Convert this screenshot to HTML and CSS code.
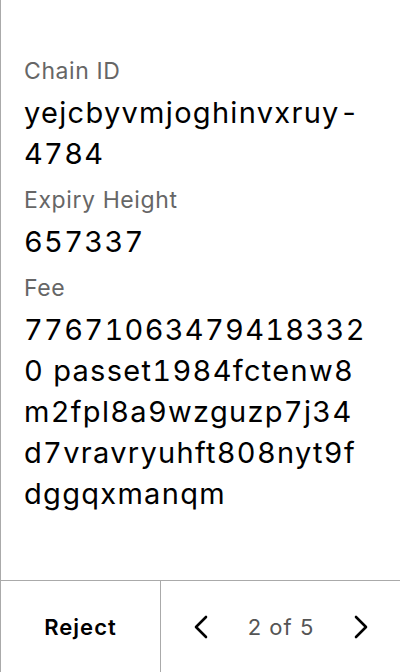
FILE: index.html
```html
<!DOCTYPE html>
<html>
<head>
<meta charset="utf-8">
<link rel="stylesheet" href="styles.css">
</head>
<body>
<div class="screen">
  <div class="content">
    <div class="field">
      <div class="label">Chain ID</div>
      <div class="value">yejcbyvmjoghinvxruy-4784</div>
    </div>
    <div class="field">
      <div class="label">Expiry Height</div>
      <div class="value">657337</div>
    </div>
    <div class="field">
      <div class="label">Fee</div>
      <div class="value">776710634794183320 passet1984fctenw8m2fpl8a9wzguzp7j34d7vravryuhft808nyt9fdggqxmanqm</div>
    </div>
  </div>
  <div class="footer">
    <div class="reject">Reject</div>
    <div class="pager">
      <svg class="chev" width="16" height="24" viewBox="0 0 16 24"><path d="M13 2 L3 12 L13 22" fill="none" stroke="#000" stroke-width="2.6" stroke-linecap="round" stroke-linejoin="round"/></svg>
      <span class="count">2 of 5</span>
      <svg class="chev" width="16" height="24" viewBox="0 0 16 24"><path d="M3 2 L13 12 L3 22" fill="none" stroke="#000" stroke-width="2.6" stroke-linecap="round" stroke-linejoin="round"/></svg>
    </div>
  </div>
</div>
</body>
</html>
```
FILE: styles.css
```css
html, body {
  margin: 0;
  padding: 0;
  background: #fff;
}
body {
  font-family: Inter, "Noto Sans", sans-serif;
  color: #000;
}
.screen {
  width: 400px;
  height: 672px;
  box-sizing: border-box;
  border-left: 1px solid #aaa;
  display: flex;
  flex-direction: column;
}
.content {
  flex: 1;
  padding: 57px 34px 0 23px;
  display: flex;
  flex-direction: column;
  gap: 12px;
}
.field {
  display: flex;
  flex-direction: column;
  gap: 7px;
}
.label {
  font-size: 23px;
  line-height: 28px;
  letter-spacing: 0.6px;
  color: #666;
}
.value {
  font-size: 29px;
  line-height: 41px;
  letter-spacing: 1.3px;
  font-variant-numeric: tabular-nums;
  word-break: break-all;
}
.footer {
  height: 92px;
  border-top: 1px solid #aaa;
  box-sizing: border-box;
  display: flex;
}
.reject {
  width: 159px;
  border-right: 1px solid #aaa;
  display: flex;
  align-items: center;
  justify-content: center;
  font-size: 22px;
  font-weight: 600;
  letter-spacing: 1px;
}
.pager {
  flex: 1;
  display: flex;
  align-items: center;
  justify-content: space-between;
  padding: 0 31px 0 32px;
}
.count {
  font-size: 22px;
  letter-spacing: 1px;
  color: #555;
}
```
